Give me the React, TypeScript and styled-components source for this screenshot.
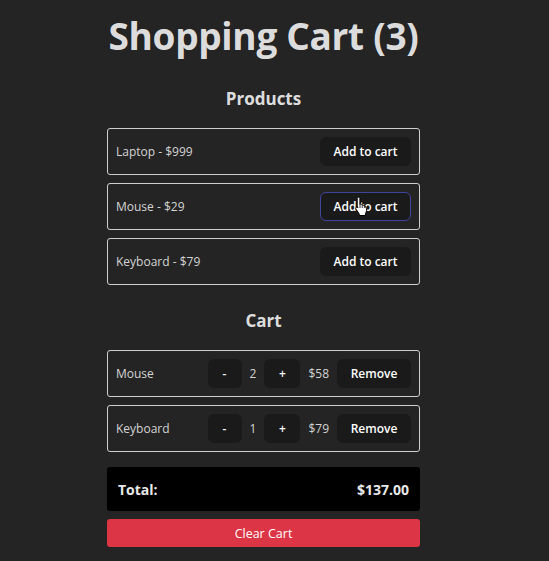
import React, { FC } from "react";
import styled, { createGlobalStyle } from "styled-components";

const GlobalStyle = createGlobalStyle`
  html, body {
    margin: 0;
    padding: 0;
    background: #242424;
    color: rgba(255, 255, 255, 0.87);
    font-family: "Open Sans", "Noto Sans", sans-serif;
  }
`;

type Product = { name: string; price: number };
type CartItem = Product & { qty: number };

const products: Product[] = [
  { name: "Laptop", price: 999 },
  { name: "Mouse", price: 29 },
  { name: "Keyboard", price: 79 }
];

const cart: CartItem[] = [
  { name: "Mouse", price: 29, qty: 2 },
  { name: "Keyboard", price: 79, qty: 1 }
];

const Page = styled.div`
  width: 313px;
  margin-left: 107px;
  padding-top: 10px;
  display: flex;
  flex-direction: column;
`;

const Title = styled.h1`
  margin: 0;
  font-size: 37px;
  font-weight: 700;
  line-height: 52px;
  text-align: center;
  white-space: nowrap;
  letter-spacing: -0.3px;
`;

const SectionTitle = styled.h2<{ $top: number }>`
  margin: ${p => p.$top}px 0 17px;
  font-size: 17px;
  font-weight: 700;
  line-height: 24px;
  text-align: center;
`;

const List = styled.div`
  display: flex;
  flex-direction: column;
  gap: 8px;
`;

const Row = styled.div`
  display: flex;
  align-items: center;
  border: 1px solid #cfcfcf;
  border-radius: 3px;
  padding: 8px;
  height: 29px;
  gap: 8px;
`;

const Label = styled.span<{ $grow?: boolean }>`
  font-size: 12px;
  color: #d4d4d4;
  flex: ${p => (p.$grow ? "1" : "none")};
`;

const Button = styled.button<{ $w: number; $hover?: boolean }>`
  position: relative;
  width: ${p => p.$w}px;
  height: 29px;
  padding: 0;
  border-radius: 6px;
  border: 1px solid ${p => (p.$hover ? "#3f44a0" : "transparent")};
  background: #1a1a1a;
  color: #fff;
  font-family: inherit;
  font-size: 12px;
  font-weight: 600;
  cursor: pointer;
`;

const Qty = styled.span`
  font-size: 12px;
  color: #d4d4d4;
`;

const Price = styled.span`
  font-size: 12px;
  color: #d4d4d4;
`;

const Total = styled.div`
  margin-top: 15px;
  display: flex;
  justify-content: space-between;
  align-items: center;
  background: #000;
  border-radius: 3px;
  height: 44px;
  padding: 0 11px;
  font-size: 14px;
  font-weight: 700;
  color: #e8e8e8;
`;

const ClearButton = styled.button`
  margin-top: 8px;
  height: 28px;
  border: none;
  border-radius: 3px;
  background: #dc3545;
  color: #fff;
  font-family: inherit;
  font-size: 12.5px;
  cursor: pointer;
`;

const Cursor = styled.svg`
  position: absolute;
  left: 33px;
  top: 3px;
  pointer-events: none;
`;

const HandCursor: FC = () => (
  <Cursor width="16" height="20" viewBox="0 0 16 20">
    <path
      d="M4.5 1.2c.8 0 1.4.6 1.4 1.4v5.6l.4-.1c.8-.2 1.5.2 1.7.8.6-.3 1.4-.1 1.8.5.6-.2 1.4.1 1.7.8l.9 2.3c.4 1.2.3 2.5-.2 3.6l-.8 1.7v1.7H5.2v-1.6L2.1 13.3c-.5-.6-.4-1.5.2-2 .6-.4 1.4-.3 1.9.2l-1-.1V2.6c0-.8.5-1.4 1.3-1.4z"
      fill="#fff"
      stroke="#000"
      strokeWidth="1"
      strokeLinejoin="round"
    />
    <path d="M6 8v4M8.2 8.9v3.1M10.4 9.6v2.4" stroke="#000" strokeWidth="0.8" />
  </Cursor>
);

const App: FC = () => {
  const count = cart.reduce((s, i) => s + i.qty, 0);
  const total = cart.reduce((s, i) => s + i.qty * i.price, 0);
  return (
    <>
      <GlobalStyle />
      <Page>
        <Title>Shopping Cart ({count})</Title>
        <SectionTitle $top={25}>Products</SectionTitle>
        <List>
          {products.map(p => (
            <Row key={p.name}>
              <Label $grow>
                {p.name} - ${p.price}
              </Label>
              <Button $w={91} $hover={p.name === "Mouse"}>
                Add to cart
                {p.name === "Mouse" && <HandCursor />}
              </Button>
            </Row>
          ))}
        </List>
        <SectionTitle $top={24}>Cart</SectionTitle>
        <List>
          {cart.map(i => (
            <Row key={i.name}>
              <Label $grow>{i.name}</Label>
              <Button $w={34}>-</Button>
              <Qty>{i.qty}</Qty>
              <Button $w={36}>+</Button>
              <Price>${i.qty * i.price}</Price>
              <Button $w={74}>Remove</Button>
            </Row>
          ))}
        </List>
        <Total>
          <span>Total:</span>
          <span>${total.toFixed(2)}</span>
        </Total>
        <ClearButton>Clear Cart</ClearButton>
      </Page>
    </>
  );
};

export default App;
